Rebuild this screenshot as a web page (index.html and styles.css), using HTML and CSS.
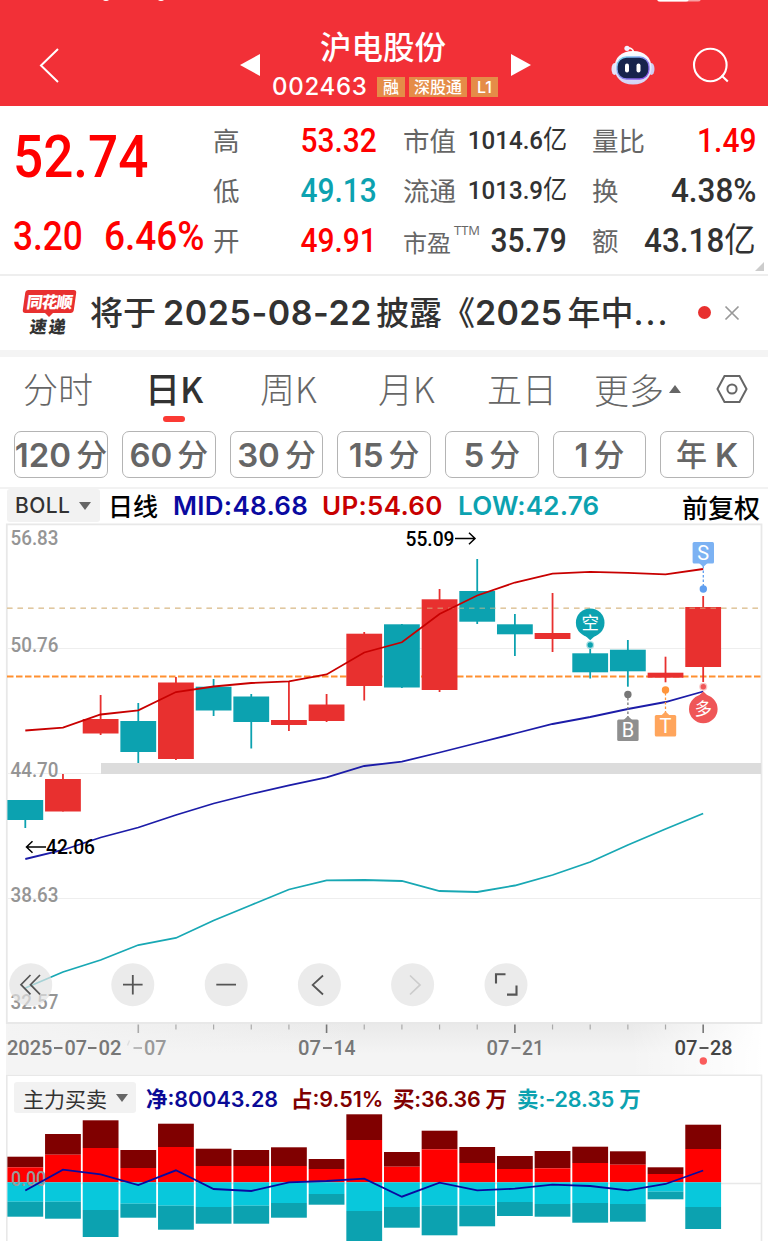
FILE: index.html
```html
<!DOCTYPE html>
<html lang="zh-CN">
<head>
<meta charset="utf-8">
<title>沪电股份 002463</title>
<link rel="stylesheet" href="styles.css">
</head>
<body>
<header class="header">
  <svg class="status" width="768" height="4" viewBox="0 0 768 4"><rect x="657" y="-6" width="44" height="7.5" rx="3" fill="#f7a0a3"/><rect x="657" y="-6" width="32" height="7.5" rx="3" fill="#fff"/><circle cx="106" cy="-3" r="4" fill="#fff"/><circle cx="161" cy="-3" r="4" fill="#fff"/></svg>
  <svg class="back" width="24" height="40" viewBox="0 0 24 40"><path d="M21 3 4 19.500l17 16.500" fill="none" stroke="#fff" stroke-width="2"/></svg>
  <svg class="prev" width="20" height="24" viewBox="0 0 20 24"><path d="M0 12 20 1v22z" fill="#fff"/></svg>
  <div class="title">
    <h1>沪电股份</h1>
    <div class="code"><b>002463</b><i>融</i><i>深股通</i><i>L1</i></div>
  </div>
  <svg class="next" width="20" height="24" viewBox="0 0 20 24"><path d="M20 12 0 1v22z" fill="#fff"/></svg>
  <svg class="robot" width="44" height="42" viewBox="0 0 44 42">
    <defs>
      <linearGradient id="shell" x1="0" y1="0" x2="0" y2="1"><stop offset="0" stop-color="#fff"/><stop offset="1" stop-color="#d3d2f5"/></linearGradient>
      <linearGradient id="rim" x1="0" y1="0" x2="1" y2="1"><stop offset="0" stop-color="#78e0f0"/><stop offset=".5" stop-color="#8a8cf0"/><stop offset="1" stop-color="#8b45e6"/></linearGradient>
    </defs>
    <path d="M16.500 3.500c3-1 6 .5 6 4" fill="none" stroke="#fff" stroke-width="1.600"/><circle cx="16" cy="3.300" r="2.600" fill="#f3f2ff"/>
    <ellipse cx="3.500" cy="24" rx="3" ry="6" fill="#e3e3fa"/><ellipse cx="40.500" cy="24" rx="3" ry="6" fill="#cfcdf2"/>
    <path d="M22 6C34 6 40.500 13 40.500 22.500S34 39.500 22 39.500 3.500 32 3.500 22.500 10 6 22 6z" fill="url(#shell)"/>
    <rect x="6" y="12" width="32" height="22" rx="9.500" fill="#17234c" stroke="url(#rim)" stroke-width="1.300"/>
    <rect x="14" y="18.500" width="4" height="9" rx="2" fill="#fff"/><rect x="25.500" y="18.500" width="4" height="9" rx="2" fill="#fff"/>
  </svg>
  <svg class="search" width="38" height="38" viewBox="0 0 38 38" fill="none" stroke="#fff" stroke-width="2.100"><circle cx="18.300" cy="18" r="16.300"/><path d="m29.500 28.500 6.300 6"/></svg>
</header>

<section class="quote">
  <div class="main">
    <div class="price"><span class="num">52.74</span></div>
    <div class="change"><span class="num">3.20</span><span class="num pct">6.46%</span></div>
  </div>
  <div class="stats">
    <span>高</span><b class="num up">53.32</b>
    <span>市值</span><b class="num small">1014.6<em>亿</em></b>
    <span>量比</span><b class="num up">1.49</b>
    <span>低</span><b class="num down">49.13</b>
    <span>流通</span><b class="num small">1013.9<em>亿</em></b>
    <span>换</span><b class="num wide">4.38%</b>
    <span>开</span><b class="num up">49.91</b>
    <span class="pe">市盈<sup>TTM</sup></span><b class="num">35.79</b>
    <span>额</span><b class="num wide">43.18<em>亿</em></b>
  </div>
  <svg class="corner" width="9" height="9" viewBox="0 0 9 9"><path d="M9 0v9H0z" fill="#ccc"/></svg>
</section>

<section class="notice">
  <div class="brand"><span class="brand-top">同花顺</span><span class="brand-tail"></span><span class="brand-bottom">速递</span></div>
  <p>将于<span class="date">2025-08-22</span>披露<span class="book">《</span><span class="year">2025</span>年中<span class="dots">...</span></p>
  <i class="dot"></i>
  <svg width="16" height="16" viewBox="0 0 16 16"><path d="m1.500 1.500 13 13m0-13-13 13" stroke="#999" stroke-width="1.700"/></svg>
</section>

<nav class="tabs">
  <span>分时</span><span class="active">日K</span><span>周K</span><span>月K</span><span>五日</span><span class="more">更多<svg width="12" height="8" viewBox="0 0 12 8"><path d="M6 0 12 8H0z" fill="#666"/></svg></span>
  <svg class="gear" width="32" height="30" viewBox="0 0 32 30" fill="none" stroke="#666" stroke-width="2"><path d="M8.500 2h15L30.500 15l-7 13h-15L1.500 15z"/><circle cx="16" cy="15" r="4.600"/></svg>
</nav>
<div class="periods"><span>120<em>分</em></span><span>60<em>分</em></span><span>30<em>分</em></span><span>15<em>分</em></span><span>5<em>分</em></span><span>1<em>分</em></span><span><em class="first">年</em>K</span></div>

<div class="indicator">
  <span class="chip">BOLL<svg width="12" height="8" viewBox="0 0 12 8"><path d="M0 0h12L6 8z" fill="#666"/></svg></span>
  <b class="line-name">日线</b><b class="mid">MID:48.68</b><b class="upper">UP:54.60</b><b class="low">LOW:42.76</b><b class="adjust">前复权</b>
</div>

<main class="charts">
  <svg id="chart" width="768" height="719" viewBox="0 522 768 719"></svg>
  <div class="flow">
    <span class="chip">主力买卖<svg width="12" height="8" viewBox="0 0 12 8"><path d="M0 0h12L6 8z" fill="#666"/></svg></span>
    <b class="net">净:80043.28</b><b class="share">占:9.51%</b><b class="buy">买:36.36<em>万</em></b><b class="sell">卖:-28.35<em>万</em></b>
  </div>
</main>
<script src="chart.js"></script>
</body>
</html>
```
FILE: styles.css
```css
* { box-sizing: border-box; }
body { margin: 0; width: 768px; height: 1242px; overflow: hidden; background: #fff; color: #323232; font-family: Inter, "Noto Sans CJK SC", sans-serif; }
h1, p { margin: 0; }
i, em { font-style: normal; }
svg { display: block; flex: none; }

.header { position: relative; display: flex; align-items: flex-start; height: 106px; background: #f23037; color: #fff; }
.status { position: absolute; left: 0; top: 0; }
.back { margin: 46px 0 0 37px; }
.prev { margin: 53px 0 0 179px; }
.title { width: 251px; padding-top: 23px; text-align: center; }
.title h1 { font: 500 31.500px/44px "Noto Sans CJK SC", sans-serif; padding-right: 5px; }
.code { display: flex; align-items: center; gap: 4px; height: 22px; margin: 9px 0 0 12px; }
.code b { font-size: 24px; line-height: 22px; font-weight: 500; letter-spacing: .7px; margin-right: 5px; width: 96px; text-align: left; white-space: nowrap; }
.code i { background: #e58c48; height: 20px; line-height: 20px; padding: 0 6px; font-size: 16px; font-weight: 500; white-space: nowrap; }
.code i:nth-child(3) { padding: 0 5px; }
.next { margin: 53px 0 0 0; }
.robot { margin: 45px 0 0 80px; }
.search { margin: 47px 0 0 37px; }

.num { display: inline-block; font-family: Roboto, "Noto Sans CJK SC", sans-serif; font-weight: 500; white-space: nowrap; }
.quote { position: relative; display: flex; height: 170px; border-bottom: 2px solid #eee; }
.main { width: 214px; padding: 14px 0 0 13px; color: #f00; }
.price { height: 70px; font-size: 60px; line-height: 70px; }
.price .num { transform: scaleX(.885); transform-origin: left; }
.change { display: flex; height: 46px; margin-top: 24px; font-size: 40px; line-height: 46px; }
.change .num { transform: scaleX(.88); transform-origin: left; width: 91px; }
.change .pct { transform: scaleX(.925); }
.stats { display: grid; grid-template-columns: 70px 93px 90px 100px 89px 100px; grid-template-rows: 50px 50px 50px; padding-top: 9px; width: 542px; }
.stats > span { font: 400 26.500px/50px "Noto Sans CJK SC", sans-serif; color: #666; white-space: nowrap; margin-left: -1px; }
.stats > span:nth-child(6n+3) { padding-left: 27px; }
.stats > span:nth-child(6n+5) { padding-left: 26px; }
.stats > b { justify-self: end; font-size: 34px; line-height: 50px; transform: translateY(-.5px) scaleX(.88); transform-origin: right; }
.stats .wide { transform: translateY(-.5px) scaleX(.925); }
.stats .small { font-size: 26.500px; transform: scaleX(.91); }
.stats em { font-weight: 400; }
.stats .pe { font-size: 24px; line-height: 54px; }
.pe sup { display: inline-block; font: 400 13px/14px "Open Sans", sans-serif; letter-spacing: 0; margin-left: 3px; vertical-align: 17px; line-height: 0; }
.stats .up { color: #f00; }
.stats .down { color: #0ca2b0; }
.corner { position: absolute; right: 4px; bottom: 3px; }

.notice { display: flex; align-items: center; height: 81px; padding: 0 28px 1px 22px; border-bottom: 7px solid #f4f4f4; }
.brand { display: flex; flex-direction: column; align-items: center; width: 54px; margin-right: 14px; padding-bottom: 2px; }
.brand-top { width: 51px; height: 23px; background: #e8302f; color: #fff; border-radius: 3px; font: 900 16px/22px "Noto Sans CJK SC", sans-serif; text-align: center; transform: skewX(-8deg); letter-spacing: -1px; }
.brand-tail { border: 4px solid transparent; border-top-color: #e8302f; border-bottom: 0; }
.brand-bottom { font: 900 17px/17px "Noto Sans CJK SC", sans-serif; letter-spacing: 2px; transform: skewX(-8deg); }
.notice p { width: 592px; font-size: 33px; font-weight: 500; line-height: 50px; white-space: nowrap; }
.date { margin: 0 4px 0 7px; font-size: 34px; letter-spacing: .55px; font-weight: 600; }
.year { margin-right: 5px; font-size: 34px; letter-spacing: .3px; font-weight: 600; }
.dots { letter-spacing: 2px; }
.dot { width: 13px; height: 13px; margin: 0 13px 0 16px; border-radius: 50%; background: #e8302f; }

.tabs { position: relative; display: flex; height: 72px; padding-left: 23px; font: 300 35px/62px "Noto Sans CJK SC", sans-serif; color: #666; }
.tabs > span { width: 118px; white-space: nowrap; }
.tabs .active { position: relative; width: 119px; padding-left: 4px; color: #323232; font-weight: 500; }
.tabs .active::after { content: ""; position: absolute; left: 22px; top: 59px; width: 22px; height: 6px; border-radius: 3px; background: #fb3a34; }
.tabs > span:nth-child(4) { width: 109px; }
.tabs > span:nth-child(5) { width: 107px; }
.tabs .more { display: flex; align-items: center; gap: 5px; width: 122px; height: 64px; }
.gear { margin-top: 17px; }
.periods { display: flex; gap: 14px; padding: 2px 14px 0; height: 58px; }
.periods span { display: flex; align-items: center; justify-content: center; width: 94px; height: 47px; border: 1.500px solid #b4b4b4; border-radius: 7px; color: #666; font-size: 33px; font-weight: 600; white-space: nowrap; }
.periods em { font-size: 31px; line-height: 44px; margin-left: 5px; font-weight: 500; }
.periods .first { margin: 0 8px 0 0; }

.indicator { display: flex; align-items: center; height: 35px; border-top: 2px solid #f2f2f2; padding: 0 7px 0; font-size: 26px; white-space: nowrap; }
.indicator b { font-weight: 600; letter-spacing: .3px; }
.chip { display: flex; align-items: center; gap: 9px; background: #f2f2f2; border-radius: 3px; }
.indicator .chip { width: 93px; height: 33px; padding-left: 8px; font-size: 21px; font-weight: 500; letter-spacing: .4px; }
.indicator .line-name { width: 73px; padding: 0 0 2px 8px; color: #000; font-weight: 500; font-size: 25px; letter-spacing: 0; }
.indicator .mid { width: 149px; padding-left: 0; color: #0a0aa0; }
.indicator .upper { width: 136px; color: #c80000; }
.indicator .low { width: 224px; color: #0ca2b0; letter-spacing: .2px; }
.indicator .adjust { color: #000; font-size: 26px; font-weight: 500; padding-top: 2px; letter-spacing: 0; }

.charts { display: grid; height: 719px; }
.charts > * { grid-area: 1 / 1; }
.flow { display: flex; align-items: center; height: 31px; margin: 560px 0 0 14px; font-size: 21.500px; white-space: nowrap; }
.flow .chip { width: 122px; height: 31px; padding-left: 9px; font-size: 21px; }
.flow em { margin-left: 5px; }
.flow b { font-weight: 600; padding-bottom: 1px; }
.net { width: 146px; padding-left: 10px; color: #0a0a96; }
.share { width: 102px; padding-left: 9px; color: #800000; }
.buy { width: 124px; padding-left: 9px; color: #800000; letter-spacing: -.2px; }
.sell { padding-left: 9px; color: #0ca2b0; letter-spacing: -.1px; }
#chart text { font-family: Roboto, "Noto Sans CJK SC", sans-serif; }
```
FILE: chart.js
```js
const svg = document.getElementById('chart');
const RED = '#e8302f', TEAL = '#0ca2b0', W = 35.8;
const x = i => 25.3 + 37.66 * i;
const out = [];
const rect = (l, t, w, h, fill, extra = '') => out.push(`<rect x="${l}" y="${t}" width="${w}" height="${h}" fill="${fill}" ${extra}/>`);
const text = (l, b, w, s, size, fill, weight = 500) => out.push(`<text x="${l}" y="${b}" textLength="${w}" lengthAdjust="spacingAndGlyphs" font-size="${size}" font-weight="${weight}" fill="${fill}">${s}</text>`);
const line = (d, color, width, extra = '') => out.push(`<path d="${d}" fill="none" stroke="${color}" stroke-width="${width}" ${extra}/>`);
const series = (ys, color) => line('M' + ys.map((y, i) => x(i) + ' ' + y).join('L'), color, 1.8);
// date label whose hyphen is drawn as a wide dash between tabular digits
const dateLabel = (l, w, a, b, fill) => { text(l, 1055, 23, a, 20.5, fill); line(`M${l + 25} 1048H${l + 34}`, fill, 1.8); text(l + 35.5, 1055, w - 35.5, b, 20.5, fill); };

// frame, date band and grid
out.push('<defs><linearGradient id="band" x1="0" y1="0" x2="0" y2="1"><stop offset="0" stop-color="#e9e9e9"/><stop offset=".6" stop-color="#f4f4f4"/></linearGradient><linearGradient id="fadeL"><stop offset="0" stop-color="#f4f4f4"/><stop offset="1" stop-color="#f4f4f4" stop-opacity="0"/></linearGradient><linearGradient id="fadeR"><stop offset="0" stop-color="#fff" stop-opacity="0"/><stop offset="1" stop-color="#fff"/></linearGradient></defs>');
rect(6, 1023, 756, 51, 'url(#band)');
rect(6, 1023, 350, 51, 'url(#fadeL)');
rect(630, 1023, 133, 51, 'url(#fadeR)');
line('M6.800 1023V524.300H761.500V1023Z', '#e8e8e8', 1.8);
line('M6.800 1242V1075.300H761.500V1242M7 1183.500H761', '#e8e8e8', 1.6);
line('M8 648.500H761M8 773.500H761M8 898.500H761', '#eee', 1.2);
rect(101, 763, 660, 11, '#dcdcdc');
line('M7 608.300H761', '#f0d8b8', 1.6, 'stroke-dasharray="5.500 5"');
line('M7 676.500H761', '#ff9030', 1.8, 'stroke-dasharray="6.500 2.500"');

// [rising, high, top, bottom, low]
[[0,800,800,820,828],[1,774,779,811.5,811.5],[1,695,719,733.5,735],[0,703,721,752,763],[1,677,682.5,759,760],[0,679,686.7,710.5,716],[0,694,696.5,722,748.5],[1,681,720,725,731],[1,694,704.5,721,722],[1,632,633.7,686,700.5],[0,624,624.3,687.5,688],[1,589,599.3,690,692],[0,559,591,621.7,624],[0,614,624.3,634.3,656],[1,593,633,639,652],[0,649,653.3,672.3,678.5],[0,640,649.7,671.3,686.7],[1,656.7,672.7,677.7,682.3],[1,596,607,667,682]].forEach((c, i) => {
  const color = c[0] ? RED : TEAL;
  line(`M${x(i)} ${c[1]}V${c[4]}`, color, 1.8);
  rect(x(i) - W / 2, c[2], W, c[3] - c[2], color);
});
line('M7 608.300H761', '#d4bc8c', 1.4, 'stroke-dasharray="5.500 5" opacity=".55"');
series([730.5,727.7,714.5,710.3,692,686.5,683,681.3,674.5,652.5,642.3,614,595.5,582.5,573.7,571.8,572.8,574.3,569], '#c80000');
series([859,850,837.5,827.5,815,803.5,794,785.3,777.3,766,761.7,752.5,743,733.5,724,717,709,702,691.5], '#1c1ca8');
series([988,972,960,945,938,920.5,905,889.5,880.3,880,881,891,892,885.5,875,862,845,829,813.5], '#18a8b4');

// price axis
[['56.83',544.5],['50.76',652],['44.70',777],['38.63',902],['32.57',1008.500]].forEach(a => text(10.5, a[1], 48, a[0], 20, '#959595'));
text(405.5, 546, 49, '55.09', 20.500, '#000', 500);
line('M455 538.500H474.500M469 532.800L475 538.500L469 544.200', '#000', 1.5);
text(46, 854, 49, '42.06', 20.500, '#000', 500);
line('M46 847H27M32.500 841.300L26.500 847L32.500 852.700', '#000', 1.5);

// signal markers
const tag = (cx, top, s, fill) => { rect(cx - 10.7, top, 21.4, 21.5, fill, 'rx="1.500"'); out.push(`<text x="${cx}" y="${top + 17.7}" font-size="20" text-anchor="middle" fill="#fff">${s}</text>`); };
const pin = (cx, cy, s, fill, dy) => {
  out.push(`<circle cx="${cx}" cy="${cy}" r="14.300" fill="${fill}"/><path d="M${cx - 6} ${cy + dy * 12}L${cx} ${cy + dy * 17.5}L${cx + 6} ${cy + dy * 12}z" fill="${fill}"/><text x="${cx}" y="${cy + 6.3}" text-anchor="middle" font-size="17.500" fill="#fff">${s}</text>`);
  out.push(`<circle cx="${cx}" cy="${cy + dy * 22.3}" r="4" fill="${fill}" opacity=".35"/><circle cx="${cx}" cy="${cy + dy * 22.3}" r="2.700" fill="${fill}"/>`);
};
const dots = (cx, a, b, color) => line(`M${cx} ${a}V${b}`, color, 1.3, 'stroke-dasharray="2.500 2"');
pin(590.2, 622.7, '空', TEAL, 1);
pin(703.3, 709, '多', '#ef5657', -1);
dots(703.3, 566, 586, '#609fef'); tag(703.3, 542, 'S', '#7cb2f3');
out.push('<path d="M699 563h8.600l-4.300 4z" fill="#7cb2f3"/><circle cx="703.300" cy="589" r="3.700" fill="#609fef"/>');
dots(627.9, 698, 717, '#777'); tag(627.9, 719.5, 'B', '#8f8f8f');
out.push('<path d="M623.600 720h8.600l-4.300-4z" fill="#8f8f8f"/><circle cx="627.900" cy="694.500" r="3.700" fill="#777"/>');
dots(665.5, 693, 713, '#ff953a'); tag(665.5, 715, 'T', '#ffa55c');
out.push('<path d="M661.200 715.500h8.600l-4.300-4z" fill="#ffa55c"/><circle cx="665.500" cy="690" r="3.700" fill="#ff953a"/>');

// round chart controls
[30.7,132.8,226.2,319.4,412.6,506].forEach(c => out.push(`<circle cx="${c}" cy="984.700" r="21.500" fill="${c < 40 ? '#e2e2e2' : '#ebebeb'}" fill-opacity="${c < 40 ? .7 : 1}"/>`));
line('M30.500 975 21 984.700 30.500 994.400M40 975 30.500 984.700 40 994.400', '#555', 1.7);
line('M123 984.700H142.600M132.800 975V994.500M216.300 984.700H236M323 975.500 312.700 984.900 323 994.500', '#555', 1.8);
line('M410 975.500 420 984.900 410 994.500', '#ccc', 1.7);
line('M496 983.500V974.300H505.500M516.500 985.500V994.600H507', '#555', 2.1);

// date ticks and labels
for (let i = 3; i < 19; i++) {
  const major = [3,8,13,18].includes(i);
  line(`M${x(i)} 1024.500V${major ? 1033 : 1029.500}`, major && i > 3 ? '#777' : '#aaa', major ? 1.6 : 1.2);
}
text(7, 1055, 45.5, '2025', 20.5, '#777');
line('M54 1048H62.500M88 1048H96.500', '#777', 1.8);
text(64.500, 1055, 22.5, '07', 20.5, '#777');
text(98.500, 1055, 23, '02', 20.5, '#777');
line('M129.500 1040.500l-2 5', '#ddd', 1.3);
line('M133.500 1048H142', '#aaa', 1.6);
text(144, 1055, 22.500, '07', 20.5, '#999');
dateLabel(298, 57.5, '07', '14', '#777');
dateLabel(486.500, 57.5, '07', '21', '#777');
dateLabel(674.500, 58, '07', '28', '#444');
out.push('<circle cx="703.300" cy="1061" r="3.700" fill="#fa5c5c"/>');

// money flow: [total buy, active buy, active sell, total sell]
[[1156.7,1167.3,1201.7,1216.7],[1134,1154.7,1201.7,1218.7],[1120.3,1148,1210,1237],[1150,1168,1203.7,1217.7],[1123.7,1147,1205.7,1229.7],[1148.7,1166,1207,1223.7],[1150,1166,1205.7,1223.7],[1147.3,1166,1203,1217.7],[1159,1169,1194,1204.7],[1114.3,1140,1211,1242],[1152,1166.7,1207,1227.7],[1130.7,1149.3,1205.7,1235.3],[1147,1163,1205.7,1226.3],[1156,1169,1202,1216],[1151,1168.3,1204,1216.7],[1146.7,1163,1203,1222.7],[1151.3,1164.7,1204,1221.7],[1167.3,1174,1191.7,1199.3],[1124.7,1149,1207,1229]].forEach((b, i) => {
  const l = x(i) - W / 2, ys = [b[0], b[1], 1182.3, b[2], b[3]];
  ['#800000', '#f00', '#08c8dc', TEAL].forEach((color, k) => rect(l, ys[k], W, ys[k + 1] - ys[k], color));
});
text(11, 1186, 35, '0.00', 20.500, '#999');
series([1190.5,1169.7,1174.3,1185,1170.3,1189,1191,1182.3,1181,1178.7,1196.7,1182.7,1190.3,1188.7,1184.7,1186,1190.3,1184,1170.5], '#0a0aa0');
svg.innerHTML = out.join('');
```
